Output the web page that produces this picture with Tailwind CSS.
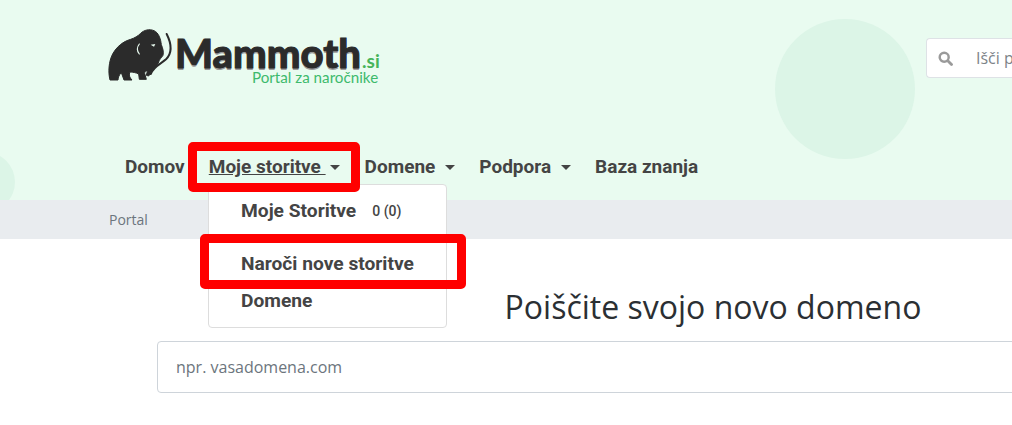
<!DOCTYPE html>
<html lang="sl">
  <head>
    <meta charset="UTF-8" />
    <meta name="viewport" content="width=device-width, initial-scale=1.0" />
    <title>Portal za naročnike</title>
    <script src="https://cdn.jsdelivr.net/npm/@tailwindcss/browser@4"></script>
  </head>
  <body class="bg-white font-['Open_Sans',sans-serif] overflow-hidden h-[425px] relative">
    <!-- Header -->
    <header class="relative h-[200px] bg-[#e9fbf0] overflow-hidden">
      <div class="absolute left-[775px] top-[19px] w-[140px] h-[140px] rounded-full bg-[#dcf5e7]"></div>
      <div class="absolute left-[-45px] top-[152px] w-[60px] h-[60px] rounded-full bg-[#dcf5e7]"></div>

      <div class="relative flex items-start pl-[104px] pt-[24px] h-[150px]">
        <!-- Logo -->
        <div class="flex w-[822px] shrink-0">
          <svg class="w-[76px] h-[60px] shrink-0" viewBox="0 0 228 180">
            <path fill="#2b2b2b" stroke="#2b2b2b" stroke-width="3" stroke-linejoin="round" d="M18 168 C12 145 14 112 26 90 C38 68 58 52 80 46 C92 42 102 36 110 28 C120 18 136 14 150 20 C164 26 170 44 172 62 C176 72 180 84 177 94 C172 102 166 106 164 114 C160 126 154 132 146 138 L134 156 L127 154 L130 142 C126 140 122 142 122 148 L127 166 L106 166 L104 150 C96 146 86 144 78 144 C74 152 76 160 84 168 L60 168 L52 146 C46 152 42 160 42 168 Z" />
            <path fill="none" stroke="#2b2b2b" stroke-width="6" stroke-linecap="round" d="M188 30 C204 62 206 86 186 106 C170 120 150 126 140 150" />
            <path fill="none" stroke="#e9fbf0" stroke-width="3.5" stroke-linecap="round" d="M106 60 C98 70 98 80 106 90" />
            <path fill="#e9fbf0" d="M140 62 L154 60 L150 68 Z" />
          </svg>
          <div class="-ml-[5px] pt-[13px]">
            <div class="flex items-baseline h-[31px] font-['Lato',sans-serif] leading-[32px]">
              <span class="font-black text-[40px] text-[#2b2b2b] [-webkit-text-stroke:1px_#2b2b2b] [text-shadow:0_2px_0_#999999]">Mammoth</span>
              <span class="ml-[1px] font-bold text-[19px] text-[#46b45a]">.si</span>
            </div>
            <div class="ml-[77px] whitespace-nowrap font-['Lato',sans-serif] text-[15.2px] leading-[18px] text-[#3dba6c]">Portal za naročnike</div>
          </div>
        </div>
        <!-- Search -->
        <div class="flex items-center shrink-0 w-[86px] h-[40px] mt-[14px] bg-white border border-r-0 border-[#dee2e6] rounded-l-[4px] overflow-hidden">
          <svg class="w-[15px] h-[15px] ml-[11px] shrink-0" viewBox="0 0 16 16">
            <circle cx="6.6" cy="6.6" r="4.8" fill="none" stroke="#9a9a9a" stroke-width="2.6" />
            <path d="M10.4 10.4 L14.4 14.4" stroke="#9a9a9a" stroke-width="3" stroke-linecap="round" />
          </svg>
          <span class="ml-[23px] text-[16px] text-[#7d8388] whitespace-nowrap">Išči p</span>
        </div>
      </div>

      <!-- Nav -->
      <nav class="relative flex items-center pl-[125px] h-[34px] font-['Roboto',sans-serif] font-bold text-[19px] text-[#444444] whitespace-nowrap">
        <a class="mr-[24px]">Domov</a>
        <a class="flex items-center mr-[25px] underline"><span class="whitespace-pre">Moje storitve </span><i class="ml-[4px] border-x-[5px] border-x-transparent border-t-[5px] border-t-[#444444]"></i></a>
        <a class="flex items-center mr-[24px]"><span>Domene</span><i class="ml-[10px] border-x-[5px] border-x-transparent border-t-[5px] border-t-[#444444]"></i></a>
        <a class="flex items-center mr-[24px]"><span>Podpora</span><i class="ml-[10px] border-x-[5px] border-x-transparent border-t-[5px] border-t-[#444444]"></i></a>
        <a>Baza znanja</a>
      </nav>
    </header>

    <!-- Breadcrumb -->
    <div class="h-[39px] flex items-center pl-[109px] bg-[#e9ecef] text-[14px] text-[#6c757d]">Portal</div>

    <!-- Domain search -->
    <main class="w-[1112px] ml-[157px] pt-[46px]">
      <h1 class="text-center text-[32px] leading-[44px] text-[#2b2f33] h-[56px]">Poiščite svojo novo domeno</h1>
      <input class="block w-full h-[52px] px-[18px] bg-white border border-[#ced4da] rounded-[4px] text-[16px] placeholder:text-[#6c757d]" placeholder="npr. vasadomena.com" />
    </main>

    <!-- Dropdown -->
    <div class="absolute left-[208px] top-[184px] w-[239px] h-[144px] bg-white border border-[#dddddd] rounded-[4px] pl-[32px] pt-[11px] font-['Roboto',sans-serif] font-bold text-[19.2px] text-[#444444]">
      <div class="flex items-center h-[30px]">Moje Storitve<span class="ml-[16px] text-[14px] font-medium">0 (0)</span></div>
      <div class="flex items-center h-[30px] mt-[23px]">Naroči nove storitve</div>
      <div class="flex items-center h-[30px] mt-[7px]">Domene</div>
    </div>

    <!-- Red highlights -->
    <div class="absolute left-[188px] top-[142px] w-[172px] h-[50px] border-[9px] border-[#ff0000] rounded-[5px]"></div>
    <div class="absolute left-[200px] top-[234px] w-[266px] h-[55px] border-[9px] border-[#ff0000] rounded-[5px]"></div>
  </body>
</html>
